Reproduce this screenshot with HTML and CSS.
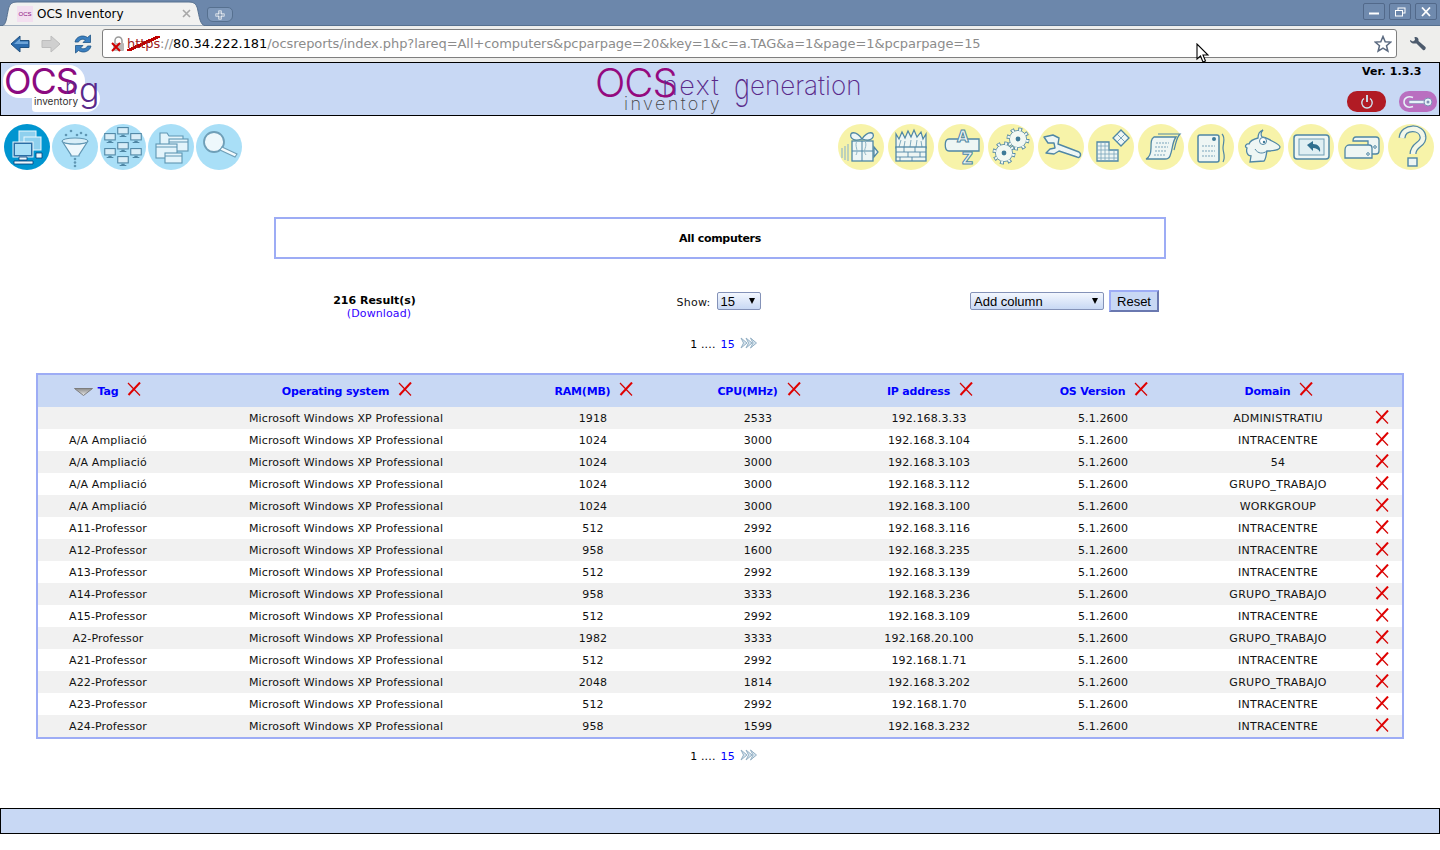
FILE: index.html
```html
<!DOCTYPE html>
<html lang="en">
<head>
<meta charset="utf-8">
<title>OCS Inventory</title>
<link rel="stylesheet" href="styles.css">
</head>
<body>
<svg class="defs" width="0" height="0" aria-hidden="true">
  <symbol id="del" viewBox="0 0 14 14">
    <path d="M1 1 L13 13.500" stroke="#d40000" stroke-width="1.200" fill="none"/>
    <path d="M13 .5 L1.500 13" stroke="#e00000" stroke-width="2" fill="none"/>
  </symbol>
  <symbol id="mon" viewBox="0 0 14 12">
    <rect x=".7" y=".7" width="12.600" height="7.600" fill="#d8edf7" stroke="#4f87a5" stroke-width="1.300"/>
    <path d="M5 10h4M3 11.300h8" stroke="#4f87a5" stroke-width="1.300"/>
  </symbol>
  <symbol id="pagenext" viewBox="0 0 17 12">
    <path d="M1 1 L7 6 L1 11 L3.500 6Z M6 1 L12 6 L6 11 L8.500 6Z M10.500 1 L16.500 6 L10.500 11 L13 6Z" fill="#d5e4ee" stroke="#93afc4"/>
  </symbol>
  <symbol id="gear" viewBox="0 0 24 24">
    <circle cx="12" cy="12" r="9.500" fill="none" stroke="#4f87a5" stroke-width="4" stroke-dasharray="3.730 3.730"/>
    <circle cx="12" cy="12" r="8.600" fill="#f2f8f2" stroke="#4f87a5" stroke-width=".8"/>
    <circle cx="12" cy="12" r="9.500" fill="none" stroke="#f2f8f2" stroke-width="2.600" stroke-dasharray="2 5.460" stroke-dashoffset="-.87"/>
    <circle cx="12" cy="12" r="2.400" fill="#3e7a98"/>
  </symbol>
</svg>

<div class="tabstrip">
  <div class="tab">
    <svg class="tab-shape" width="207" height="25" viewBox="0 0 207 25"><path d="M0 25 C6 25 6 20 8 10 C9 4 11 1 17 1 H189 C195 1 197 4 198 10 C200 20 201 25 207 25Z" fill="#f1f1f0" stroke="#56708f"/></svg>
    <span class="favicon"><span class="favicon-text">OCS</span></span>
    <span class="tab-title">OCS Inventory</span>
    <svg class="tab-close" width="9" height="9" viewBox="0 0 9 9"><path d="M1 1L8 8M8 1L1 8" stroke="#a8a8a8" stroke-width="1.600"/></svg>
  </div>
  <div class="newtab"><svg width="12" height="12" viewBox="0 0 12 12"><path d="M6 1.500v9M1.500 6h9" stroke="#fff" stroke-width="3.200"/><path d="M6 2v8M2 6h8" stroke="#58769b" stroke-width="1"/></svg></div>
  <div class="winbtns">
    <span class="winbtn"><svg width="12" height="10" viewBox="0 0 12 10"><path d="M1 6.500h10" stroke="#fff" stroke-width="2"/></svg></span>
    <span class="winbtn"><svg width="12" height="10" viewBox="0 0 12 10"><rect x="4" y="1" width="7" height="5" fill="none" stroke="#fff"/><rect x="1.500" y="3.500" width="7" height="5.500" fill="#6c87ab" stroke="#fff"/></svg></span>
    <span class="winbtn"><svg width="12" height="10" viewBox="0 0 12 10"><path d="M2 .5L10 9M10 .5L2 9" stroke="#fff" stroke-width="1.800"/></svg></span>
  </div>
</div>

<div class="toolbar">
  <svg class="tool" width="20" height="20" viewBox="0 0 20 20"><path d="M1 10 L10 2 V6.500 H19 V13.500 H10 V18Z" fill="#2c6cae" stroke="#20507f"/><path d="M4 10 L10 4.500V7.500H18V10Z" fill="#6da4d8"/></svg>
  <svg class="tool tool-forward" width="20" height="20" viewBox="0 0 20 20"><path d="M19 10 L10 2 V6.500 H1 V13.500 H10 V18Z" fill="#cfcfcf" stroke="#bdbdbd"/></svg>
  <svg class="tool tool-reload" width="20" height="20" viewBox="0 0 20 20"><path d="M2 8 C3 3 9 0 14.500 3.500 L17.500 1 V8.500 H10 L12.500 6 C9 4 6.500 6 5.500 8Z" fill="#3b7fc0" stroke="#1f5587" stroke-width=".8"/><path d="M18 12 C17 17 11 20 5.500 16.500 L2.500 19 V11.500 H10 L7.500 14 C11 16 13.500 14 14.500 12Z" fill="#3b7fc0" stroke="#1f5587" stroke-width=".8"/></svg>
  <div class="omnibox">
    <svg class="lock" width="16" height="17" viewBox="0 0 16 17"><path d="M5 7V4.500a3.500 3.500 0 0 1 7 0V7" fill="none" stroke="#9a9a9a" stroke-width="1.500"/><rect x="3" y="7" width="11" height="8" rx="1" fill="#b8b8b8"/><path d="M2 7L10 15M10 7L2 15" stroke="#d00000" stroke-width="2"/></svg>
    <span class="url"><span class="url-scheme">https</span>://<span class="url-host">80.34.222.181</span>/ocsreports/index.php?lareq=All+computers&amp;pcparpage=20&amp;key=1&amp;c=a.TAG&amp;a=1&amp;page=1&amp;pcparpage=15</span>
    <svg class="star" width="18" height="18" viewBox="0 0 18 18"><path d="M9 1.500 L11.200 6.700 L16.800 7.100 L12.500 10.700 L13.900 16.200 L9 13.200 L4.100 16.200 L5.500 10.700 L1.200 7.100 L6.800 6.700Z" fill="#fff" stroke="#5b6a80" stroke-width="1.500"/></svg>
  </div>
  <svg class="wrench" width="18" height="16" viewBox="0 0 18 16"><path d="M1 4 L4 5.500 L6 4 L5.500 1 C8 .5 10 2 9.500 5 L16.500 11 C17.500 12.500 15.500 15 14 14 L7.500 7.500 C4.500 8 1 7 1 4Z" fill="#4c5a6c"/></svg>
</div>

<header class="site-header">
  <div class="logo-small">
    <span class="ls-bg"></span>
    <span class="ls-ocs">OCS</span>
    <span class="ls-n">n</span>
    <span class="ls-g">g</span>
    <span class="ls-inv">inventory</span>
  </div>
  <div class="logo-big">
    <span class="lb-ocs">OCS</span>
    <span class="lb-next">next</span>
    <span class="lb-gen"><span class="lb-g">g</span>eneration</span>
    <span class="lb-inv">inventory</span>
  </div>
  <div class="header-right">
    <div class="version">Ver. 1.3.3</div>
    <div class="pills">
      <span class="pill pill-red"><svg width="16" height="16" viewBox="0 0 16 16"><path d="M5 4.500 A5.200 5.200 0 1 0 11 4.500" fill="none" stroke="#cfe7f3" stroke-width="1.400"/><path d="M8 1v7" stroke="#cfe7f3" stroke-width="1.800"/></svg></span>
      <span class="pill pill-purple"><svg width="32" height="16" viewBox="0 0 32 16"><path d="M11 3.500 C6 1.500 2 4 2 8 C2 12 6 14.500 11 12.500" fill="none" stroke="#e6f2f8" stroke-width="1.500"/><rect x="7" y="6.500" width="17" height="3" fill="#e6f2f8" stroke="#7d90b5" stroke-width=".6"/><circle cx="26" cy="8" r="4" fill="#e6f2f8" stroke="#7d90b5"/><circle cx="26" cy="8" r="1.500" fill="#7d90b5"/></svg></span>
    </div>
  </div>
</header>

<nav class="icon-nav">
  <div class="icon-group">
    <span class="nav-icon nav-active"><svg width="46" height="46" viewBox="0 0 46 46"><g fill="#8fd0ee" stroke="#eaf7fd" stroke-width="1"><rect x="15" y="7" width="17" height="12"/><rect x="20" y="13" width="17" height="13"/><rect x="9" y="18" width="20" height="15" fill="#2a6ea6"/></g><rect x="11" y="20" width="16" height="11" fill="#a9dff7"/><g fill="#eaf7fd" stroke="#003d78" stroke-width=".8"><path d="M15 33v3h8v-3z"/><path d="M10 37h19v3H10z"/><path d="M32 29h6v5h-6z"/></g></svg></span>
    <span class="nav-icon nav-blue"><svg width="46" height="46" viewBox="0 0 46 46"><path d="M10 17 C14 21 32 21 36 17 L27 31 V32 H19 V31Z" fill="#eef8fc" stroke="#5f96b3" stroke-width="1.200"/><ellipse cx="23" cy="17" rx="13" ry="3" fill="#d7eef8" stroke="#5f96b3"/><g fill="#5f96b3"><circle cx="14" cy="11" r="1.300"/><circle cx="19" cy="7" r="1.300"/><circle cx="25" cy="11" r="1.300"/><circle cx="29" cy="9" r="1.300"/><circle cx="34" cy="11" r="1.300"/><circle cx="23" cy="35" r="1.300"/><circle cx="23" cy="38.500" r="1.300"/><circle cx="23" cy="42" r="1.300"/></g></svg></span>
    <span class="nav-icon nav-blue"><svg width="46" height="46" viewBox="0 0 46 46"><use href="#mon" x="17" y="3" width="12" height="10"/><use href="#mon" x="4" y="9" width="12" height="10"/><use href="#mon" x="30" y="9" width="12" height="10"/><use href="#mon" x="17" y="18" width="12" height="10"/><use href="#mon" x="4" y="24" width="12" height="10"/><use href="#mon" x="30" y="24" width="12" height="10"/><use href="#mon" x="17" y="32" width="12" height="10"/></svg></span>
    <span class="nav-icon nav-blue"><svg width="46" height="46" viewBox="0 0 46 46"><g fill="#e3f4fb" stroke="#5f96b3" stroke-width="1.100"><path d="M12 22V9h7l2 3h14v10z"/><rect x="21" y="15" width="19" height="12"/><rect x="8" y="20" width="21" height="14"/><rect x="17" y="29" width="17" height="10"/></g><path d="M21 18h19M8 23h21M17 32h17" stroke="#5f96b3"/></svg></span>
    <span class="nav-icon nav-blue"><svg width="46" height="46" viewBox="0 0 46 46"><circle cx="18" cy="18" r="10" fill="#eef8fc" stroke="#6f9fb8" stroke-width="1.800"/><path d="M26 23 L41 30 L39 33 L24 26Z" fill="#f3fafd" stroke="#6f9fb8" stroke-width="1.100"/></svg></span>
  </div>
  <div class="icon-group icon-group-right">
    <span class="nav-icon nav-yellow"><svg width="46" height="46" viewBox="0 0 46 46"><g fill="#edf6f6" stroke="#4f87a5" stroke-width="1.300"><rect x="14" y="17" width="21" height="20"/><path d="M24 15 C18 6 11 8 13 13 C15 17 21 16 24 15 C27 16 33 17 35 13 C37 8 30 6 24 15Z"/><path d="M36 23l4 5-4 5z"/></g><path d="M14 27h21M24 17v20" stroke="#4f87a5"/><path d="M19 17c-3 5 2 9-1 14M27 17c3 6-3 9 1 14" fill="none" stroke="#8eb4c4"/><path d="M4 24v10M7 22v14M10 20v17" stroke="#9fbfc6" stroke-width="1.300"/></svg></span>
    <span class="nav-icon nav-yellow"><svg width="46" height="46" viewBox="0 0 46 46"><path d="M8 24 V10 L11 15 L14 8 L17 14 L20 7 L23 13 L26 6 L29 13 L33 8 L35 15 L38 10 V24Z" fill="#eef6f4" stroke="#4f87a5" stroke-width="1.200"/><path d="M11 23l2-7M16 23l1-6M22 23l1-7M28 23l1-7M34 23l-1-6" stroke="#7fa9bd"/><rect x="8" y="23" width="30" height="14" fill="#eef6f4" stroke="#4f87a5" stroke-width="1.300"/><path d="M8 28h30M8 33h30M16 23v5M27 23v5M32 28v5M20 28v5M12 33v4M24 33v4" stroke="#4f87a5" stroke-width=".9"/></svg></span>
    <span class="nav-icon nav-yellow"><svg width="46" height="46" viewBox="0 0 46 46"><path d="M11 15 H41 V27 H11 C6 27 6 15 11 15Z" fill="#eef6f4" stroke="#4f87a5" stroke-width="1.300"/><text class="az" x="19" y="18">A</text><text class="az" x="24" y="40">Z</text></svg></span>
    <span class="nav-icon nav-yellow"><svg width="46" height="46" viewBox="0 0 46 46"><use href="#gear" x="18" y="3" width="24" height="24"/><use href="#gear" x="4" y="17" width="24" height="24"/></svg></span>
    <span class="nav-icon nav-yellow"><svg width="46" height="46" viewBox="0 0 46 46"><path d="M6 13 L15 11 L21 14 L20 20 L41 28 C44 30 42 35 39 33 L21 27 L16 30 L8 29 L12 25 L17 24 L16 19 L10 19Z" fill="#eef6f4" stroke="#4f87a5" stroke-width="1.400" stroke-linejoin="round"/></svg></span>
    <span class="nav-icon nav-yellow"><svg width="46" height="46" viewBox="0 0 46 46"><path d="M9 18h12v8h9v11H9z" fill="#eef6f4" stroke="#4f87a5" stroke-width="1.300"/><path d="M13 18v19M17 18v19M21 26v11M26 26v11M9 22h12M9 26h21M9 30h21M9 34h21" stroke="#7aa5bb" stroke-width=".8"/><path d="M33 6 L41 14 L33 22 L25 14Z" fill="#eef6f4" stroke="#4f87a5" stroke-width="1.300"/><path d="M29 10l8 8M37 10l-8 8" stroke="#7aa5bb"/></svg></span>
    <span class="nav-icon nav-yellow"><svg width="46" height="46" viewBox="0 0 46 46"><path d="M16 13 H38 C34 18 35 25 32 32 C31 35 29 35 27 35 H8 C12 33 13 29 13 24 C13 18 13 15 16 13Z" fill="#eef6f4" stroke="#4f87a5" stroke-width="1.300"/><path d="M20 10 H42 C38 14 38 20 36 26" fill="none" stroke="#4f87a5" stroke-width="1.200"/><path d="M18 19h13M17 23h13M17 27h12M16 31h11" stroke="#7aa5bb" stroke-dasharray="2 1"/></svg></span>
    <span class="nav-icon nav-yellow"><svg width="46" height="46" viewBox="0 0 46 46"><rect x="10" y="11" width="21" height="27" rx="2" fill="#eef6f4" stroke="#4f87a5" stroke-width="1.500"/><circle cx="26" cy="15" r="2" fill="#3e7a98"/><path d="M14 22h13M14 27h13M14 32h13" stroke="#7aa5bb" stroke-dasharray="2 1"/><path d="M34 10 C38 14 35 19 35 24 C35 29 38 32 35 38" fill="none" stroke="#4f87a5" stroke-width="1.200"/></svg></span>
    <span class="nav-icon nav-yellow"><svg width="46" height="46" viewBox="0 0 46 46"><path d="M20 14 C20 9 22 7 25 6 C22 9 23 11 24 13 C28 13 30 15 34 17 C38 19 42 21 42 23 C42 26 34 27 29 27 C28 31 28 35 26 37 L12 38 L13 32 C9 32 8 27 9 24 C6 23 8 19 11 20 C12 17 16 15 20 14Z" fill="#eef6f4" stroke="#4f87a5" stroke-width="1.300"/><circle cx="25" cy="17" r="3.500" fill="#fff" stroke="#4f87a5"/><circle cx="26" cy="18" r="1.200" fill="#3e7a98"/><path d="M17 25 C20 30 25 30 29 27" fill="none" stroke="#4f87a5"/></svg></span>
    <span class="nav-icon nav-yellow"><svg width="46" height="46" viewBox="0 0 46 46"><rect x="6" y="11" width="35" height="24" rx="3" fill="#eef6f4" stroke="#4f87a5" stroke-width="1.500"/><rect x="11" y="15" width="25" height="16" fill="#dfeff3" stroke="#6e9db3"/><path d="M19 21 L25 17 V20 C30 20 33 23 32 28 C30 25 28 24 25 24 V27Z" fill="#2f6f8f"/></svg></span>
    <span class="nav-icon nav-yellow"><svg width="46" height="46" viewBox="0 0 46 46"><path d="M15 17 C15 15 16 13 18 13 H38 C40 13 41 14 41 16 V27 C41 29 40 30 38 30 H30 V17Z" fill="#eef6f4" stroke="#4f87a5" stroke-width="1.300"/><path d="M11 21 H31 C33 21 34 22 34 24 V34 H7 V26 C7 23 9 21 11 21Z" fill="#eef6f4" stroke="#4f87a5" stroke-width="1.300"/><circle cx="30" cy="30" r="1.300" fill="none" stroke="#4f87a5"/><circle cx="37" cy="23" r="1.300" fill="none" stroke="#4f87a5"/></svg></span>
    <span class="nav-icon nav-yellow"><svg width="46" height="46" viewBox="0 0 46 46"><path d="M14 14 C15 2 34 2 35 13 C36 21 25 20 25 30" fill="none" stroke="#4f87a5" stroke-width="7"/><path d="M14 14 C15 2 34 2 35 13 C36 21 25 20 25 30" fill="none" stroke="#f3f7e8" stroke-width="4.500"/><rect x="20" y="34" width="9" height="8" fill="#eef6f4" stroke="#4f87a5" stroke-width="1.400"/></svg></span>
  </div>
</nav>

<section class="title-box">All computers</section>

<section class="controls">
  <div class="results"><strong>216 Result(s)</strong><a class="download" href="#">(Download)</a></div>
  <div class="show"><span>Show:</span><span class="select-wrap select-small"><select aria-label="Show"><option>15</option></select></span></div>
  <div class="columns"><span class="select-wrap select-wide"><select aria-label="Add column"><option>Add column</option></select></span><button class="reset" type="button">Reset</button></div>
</section>

<div class="pager"><span>1 ....</span> <a href="#">15</a> <svg class="pager-next" width="17" height="12"><use href="#pagenext"/></svg></div>

<table class="data">
  <thead>
    <tr>
      <th class="c-tag"><span class="th"><svg class="sort" width="19" height="8" viewBox="0 0 19 8"><defs><linearGradient id="sortfill" x1="0" y1="0" x2="0" y2="1"><stop offset="0" stop-color="#8c8c8c"/><stop offset="1" stop-color="#e8e8e8"/></linearGradient></defs><path d="M.5 .5 H18.500 L9.500 7.500Z" fill="url(#sortfill)" stroke="#7d7d7d"/></svg><a href="#">Tag</a><svg class="x" width="14" height="14"><use href="#del"/></svg></span></th>
      <th class="c-os"><span class="th"><a href="#">Operating system</a><svg class="x" width="14" height="14"><use href="#del"/></svg></span></th>
      <th class="c-ram"><span class="th"><a href="#">RAM(MB)</a><svg class="x" width="14" height="14"><use href="#del"/></svg></span></th>
      <th class="c-cpu"><span class="th"><a href="#">CPU(MHz)</a><svg class="x" width="14" height="14"><use href="#del"/></svg></span></th>
      <th class="c-ip"><span class="th"><a href="#">IP address</a><svg class="x" width="14" height="14"><use href="#del"/></svg></span></th>
      <th class="c-ver"><span class="th"><a href="#">OS Version</a><svg class="x" width="14" height="14"><use href="#del"/></svg></span></th>
      <th class="c-dom"><span class="th"><a href="#">Domain</a><svg class="x" width="14" height="14"><use href="#del"/></svg></span></th>
      <th class="c-del"></th>
    </tr>
  </thead>
  <tbody>
    <tr><td></td><td>Microsoft Windows XP Professional</td><td>1918</td><td>2533</td><td>192.168.3.33</td><td>5.1.2600</td><td>ADMINISTRATIU</td><td><svg class="x" width="14" height="14"><use href="#del"/></svg></td></tr>
    <tr><td>A/A Ampliació</td><td>Microsoft Windows XP Professional</td><td>1024</td><td>3000</td><td>192.168.3.104</td><td>5.1.2600</td><td>INTRACENTRE</td><td><svg class="x" width="14" height="14"><use href="#del"/></svg></td></tr>
    <tr><td>A/A Ampliació</td><td>Microsoft Windows XP Professional</td><td>1024</td><td>3000</td><td>192.168.3.103</td><td>5.1.2600</td><td>54</td><td><svg class="x" width="14" height="14"><use href="#del"/></svg></td></tr>
    <tr><td>A/A Ampliació</td><td>Microsoft Windows XP Professional</td><td>1024</td><td>3000</td><td>192.168.3.112</td><td>5.1.2600</td><td>GRUPO_TRABAJO</td><td><svg class="x" width="14" height="14"><use href="#del"/></svg></td></tr>
    <tr><td>A/A Ampliació</td><td>Microsoft Windows XP Professional</td><td>1024</td><td>3000</td><td>192.168.3.100</td><td>5.1.2600</td><td>WORKGROUP</td><td><svg class="x" width="14" height="14"><use href="#del"/></svg></td></tr>
    <tr><td>A11-Professor</td><td>Microsoft Windows XP Professional</td><td>512</td><td>2992</td><td>192.168.3.116</td><td>5.1.2600</td><td>INTRACENTRE</td><td><svg class="x" width="14" height="14"><use href="#del"/></svg></td></tr>
    <tr><td>A12-Professor</td><td>Microsoft Windows XP Professional</td><td>958</td><td>1600</td><td>192.168.3.235</td><td>5.1.2600</td><td>INTRACENTRE</td><td><svg class="x" width="14" height="14"><use href="#del"/></svg></td></tr>
    <tr><td>A13-Professor</td><td>Microsoft Windows XP Professional</td><td>512</td><td>2992</td><td>192.168.3.139</td><td>5.1.2600</td><td>INTRACENTRE</td><td><svg class="x" width="14" height="14"><use href="#del"/></svg></td></tr>
    <tr><td>A14-Professor</td><td>Microsoft Windows XP Professional</td><td>958</td><td>3333</td><td>192.168.3.236</td><td>5.1.2600</td><td>GRUPO_TRABAJO</td><td><svg class="x" width="14" height="14"><use href="#del"/></svg></td></tr>
    <tr><td>A15-Professor</td><td>Microsoft Windows XP Professional</td><td>512</td><td>2992</td><td>192.168.3.109</td><td>5.1.2600</td><td>INTRACENTRE</td><td><svg class="x" width="14" height="14"><use href="#del"/></svg></td></tr>
    <tr><td>A2-Professor</td><td>Microsoft Windows XP Professional</td><td>1982</td><td>3333</td><td>192.168.20.100</td><td>5.1.2600</td><td>GRUPO_TRABAJO</td><td><svg class="x" width="14" height="14"><use href="#del"/></svg></td></tr>
    <tr><td>A21-Professor</td><td>Microsoft Windows XP Professional</td><td>512</td><td>2992</td><td>192.168.1.71</td><td>5.1.2600</td><td>INTRACENTRE</td><td><svg class="x" width="14" height="14"><use href="#del"/></svg></td></tr>
    <tr><td>A22-Professor</td><td>Microsoft Windows XP Professional</td><td>2048</td><td>1814</td><td>192.168.3.202</td><td>5.1.2600</td><td>GRUPO_TRABAJO</td><td><svg class="x" width="14" height="14"><use href="#del"/></svg></td></tr>
    <tr><td>A23-Professor</td><td>Microsoft Windows XP Professional</td><td>512</td><td>2992</td><td>192.168.1.70</td><td>5.1.2600</td><td>INTRACENTRE</td><td><svg class="x" width="14" height="14"><use href="#del"/></svg></td></tr>
    <tr><td>A24-Professor</td><td>Microsoft Windows XP Professional</td><td>958</td><td>1599</td><td>192.168.3.232</td><td>5.1.2600</td><td>INTRACENTRE</td><td><svg class="x" width="14" height="14"><use href="#del"/></svg></td></tr>
  </tbody>
</table>

<div class="pager pager-bottom"><span>1 ....</span> <a href="#">15</a> <svg class="pager-next" width="17" height="12"><use href="#pagenext"/></svg></div>

<footer class="site-footer"></footer>

<svg class="cursor" width="14" height="21" viewBox="0 0 14 21"><path d="M1 1 V16 L4.500 13 L7 19 L9.500 18 L7 12 H12Z" fill="#fff" stroke="#000" stroke-width="1.100"/></svg>
</body>
</html>
```
FILE: styles.css
```css
* { box-sizing: border-box; }
html, body { margin: 0; padding: 0; }
body {
  width: 1440px;
  height: 850px;
  overflow: hidden;
  position: relative;
  background: #fff;
  color: #111;
  font-family: "DejaVu Sans", sans-serif;
  font-size: 11px;
}
.defs { position: absolute; }
a { color: #0000ff; text-decoration: none; }

/* browser chrome */
.tabstrip {
  height: 26px;
  background: #6c87ab;
  border-bottom: 1px solid #56708f;
  display: flex;
  align-items: flex-start;
  padding-top: 1px;
}
.tab {
  position: relative;
  width: 207px;
  height: 25px;
  display: flex;
  align-items: center;
  padding-left: 17px;
  flex: none;
}
.tab-shape { position: absolute; left: 0; top: 0; }
.favicon {
  position: relative;
  width: 16px;
  height: 16px;
  background: #f3dff0;
  display: flex;
  align-items: center;
  justify-content: center;
  overflow: hidden;
}
.favicon-text { font-size: 6px; color: #8b0a80; font-family: "Liberation Sans", sans-serif; }
.tab-title {
  position: relative;
  margin-left: 4px;
  font-size: 12px;
  color: #000;
  width: 145px;
}
.tab-close { position: relative; }
.newtab {
  margin: 6px 0 0;
  width: 26px;
  height: 15px;
  background: #7d97b9;
  border: 1px solid #56708f;
  border-radius: 3px 5px 6px 6px;
  display: flex;
  align-items: center;
  justify-content: center;
}
.winbtns { margin-left: auto; display: flex; gap: 4px; padding: 2px 3px 0 0; }
.winbtn {
  width: 22px;
  height: 17px;
  border: 1px solid #52698a;
  background: #6f8aae;
  border-radius: 2px;
  display: flex;
  align-items: center;
  justify-content: center;
}
.toolbar {
  height: 36px;
  background: #eeeeec;
  display: flex;
  align-items: center;
  padding: 0 0 1px 10px;
}
.tool { flex: none; margin-right: 11px; }
.tool-reload { margin-right: 9px; margin-left: 1px; }
.tool-forward { margin-right: 11px; }
.omnibox {
  position: relative;
  width: 1295px;
  height: 29px;
  background: #fff;
  border: 1px solid #7f7f7f;
  border-radius: 3px;
  display: flex;
  align-items: center;
  padding-left: 7px;
}
.lock { flex: none; margin-top: 2px; }
.url {
  margin-left: 1px;
  font-size: 13px;
  color: #8c8c8c;
  white-space: nowrap;
  letter-spacing: -0.07px;
}
.url-scheme {
  color: #a02020;
  background: linear-gradient(to bottom right, transparent 44%, #c00000 44%, #c00000 56%, transparent 56%);
}
.url-host { color: #000; }
.star { margin-left: auto; margin-right: 4px; }
.wrench { margin-left: 12px; }

/* site header */
.site-header {
  height: 54px;
  background: #c8d8f4;
  border: 1px solid #000;
  position: relative;
  display: flex;
  justify-content: space-between;
}
.logo-small { position: relative; width: 102px; height: 50px; }
.ls-bg {
  position: absolute;
  left: 2px; top: 2px;
  width: 82px; height: 33px;
  background: #fff;
  border-radius: 16px;
}
.ls-bg::after {
  content: "";
  position: absolute;
  left: 29px; top: 20px;
  width: 68px; height: 27px;
  background: #fff;
  border-radius: 14px 14px 14px 4px;
}
.ls-ocs, .ls-n, .ls-g, .ls-inv, .lb-ocs, .lb-next, .lb-gen, .lb-inv {
  position: absolute;
  line-height: 1;
  white-space: nowrap;
  font-family: "Inter", sans-serif;
}
.ls-ocs {
  left: 3px; top: 0;
  font-size: 36px;
  font-weight: 400;
  letter-spacing: -1px;
  color: #8b0a80;
}
.ls-n { left: 64px; top: 13px; font-size: 21px; color: #5a2a8a; font-weight: 300; }
.ls-g { left: 78px; top: 10px; font-size: 34px; color: #5a2a8a; font-weight: 300; }
.ls-inv { left: 33px; top: 33px; font-size: 10px; color: #333; }
.logo-big { position: absolute; left: 594px; top: 0; width: 270px; height: 50px; }
.lb-ocs {
  left: 0; top: 0;
  font-size: 40px;
  font-weight: 300;
  letter-spacing: -1px;
  color: #940a7f;
}
.lb-next { left: 67px; top: 9px; font-size: 27px; font-weight: 200; letter-spacing: 1.500px; color: #5a2a8a; }
.lb-gen { left: 139px; top: 10px; font-size: 26px; font-weight: 200; color: #5a2a8a; }
.lb-g {
  display: inline-block;
  width: 16px;
  font-size: 36px;
  line-height: 0;
  transform: translateY(4px) scaleX(.75);
  transform-origin: left bottom;
}
.lb-inv { left: 29px; top: 32px; font-size: 18px; font-weight: 200; letter-spacing: 2.400px; color: #444; }
.header-right {
  width: 90px;
  display: flex;
  flex-direction: column;
  justify-content: space-between;
  margin-right: 2px;
}
.version { font-weight: 700; font-size: 11px; color: #000; padding: 2px 0 0 0; letter-spacing: .1px; margin-left: 15px; }
.pills { display: flex; justify-content: space-between; margin-bottom: 3px; }
.pill {
  width: 39px;
  height: 21px;
  border-radius: 10px;
  display: flex;
  align-items: center;
  justify-content: center;
}
.pill-red { background: #b11b24; }
.pill-purple { background: #b96fc0; width: 38px; }

/* icon nav */
.icon-nav {
  display: flex;
  justify-content: space-between;
  padding: 8px 6px 0 4px;
}
.icon-group { display: flex; gap: 2px; }
.icon-group-right { gap: 4px; }
.nav-icon { width: 46px; height: 46px; border-radius: 50%; display: block; }
.nav-icon svg { display: block; }
.nav-active { background: #0095d0; }
.nav-blue { background: #a9dff7; }
.nav-yellow { background: #f7f3a9; }
.az {
  font-family: "DejaVu Sans", sans-serif;
  font-size: 15px;
  font-weight: 700;
  fill: #eef6f4;
  stroke: #4f87a5;
  stroke-width: 1;
}

/* title */
.title-box {
  width: 892px;
  height: 42px;
  margin: 47px auto 0;
  border: 2px solid #9dacf5;
  display: flex;
  align-items: center;
  justify-content: center;
  font-weight: 700;
  letter-spacing: -.3px;
  color: #000;
}

/* controls */
.controls {
  width: 1035px;
  height: 44px;
  margin: 31px 0 0 202px;
  display: grid;
  grid-template-columns: repeat(3, 1fr);
}
.results {
  display: flex;
  flex-direction: column;
  align-items: center;
  padding-top: 4px;
  line-height: 13px;
  color: #000;
}
.download { color: #3300ff; margin-left: 9px; letter-spacing: .1px; }
.show, .columns { display: flex; justify-content: center; align-items: flex-start; }
.show { gap: 6px; padding-top: 3px; line-height: 20px; letter-spacing: .25px; padding-right: 2px; }
.columns { gap: 5px; }
.select-wrap { position: relative; display: block; margin-top: 2px; }
.select-wrap::after {
  content: "";
  position: absolute;
  right: 6px; top: 6px;
  border-left: 3.500px solid transparent;
  border-right: 3.500px solid transparent;
  border-top: 6px solid #000;
  pointer-events: none;
}
.select-small { margin-top: -1px; }
.select-wrap select {
  display: block;
  appearance: none;
  height: 18px;
  padding: 0 0 0 3px;
  border: 1px solid #8492b8;
  border-radius: 2px;
  background: linear-gradient(#f3f7fe, #c8d8f4);
  color: #000;
  font-family: "Liberation Sans", sans-serif;
  font-size: 13px;
}
.select-small select { width: 44px; }
.select-wide select { width: 134px; }
.reset {
  width: 50px;
  height: 22px;
  padding: 0;
  background: #c8d8f4;
  border: 2px solid;
  border-color: #9dacf5 #6a78b0 #6a78b0 #9dacf5;
  color: #000;
  font-family: "Liberation Sans", sans-serif;
  font-size: 13px;
}

/* pager */
.pager {
  height: 20px;
  width: 1440px;
  display: flex;
  align-items: center;
  justify-content: center;
  gap: 5px;
  padding-left: 7px;
  color: #000;
  letter-spacing: .15px;
}
.pager-next { margin-top: -2px; }
.pager-bottom { margin-top: 7px; }

/* table */
.data {
  width: 1368px;
  margin: 19px 0 0 36px;
  table-layout: fixed;
  border-collapse: separate;
  border-spacing: 0;
  border: 2px solid #9dacf5;
}
.data th { height: 32px; background: #c8d8f4; padding: 0 0 0 2px; font-weight: 700; letter-spacing: -.2px; }
.data th.c-tag { padding: 0 1px 0 0; }
.data td { height: 22px; padding: 0; text-align: center; color: #111; letter-spacing: .13px; }
.data td:nth-child(7) { letter-spacing: .3px; }
.data td svg { display: block; margin: 0 auto; position: relative; left: -1px; top: -1px; }
.data tbody tr:nth-child(odd) td { background: #f1f1f1; }
.c-tag { width: 140px; }
.c-os { width: 336px; }
.c-ram { width: 158px; }
.c-cpu { width: 172px; }
.c-ip { width: 170px; }
.c-ver { width: 178px; }
.c-dom { width: 172px; }
.c-del { width: 38px; }
.th { display: inline-flex; align-items: center; gap: 9px; }
.th a { position: relative; }
.th .x { position: relative; top: -2px; }
.sort {
  margin-right: -4px;
  position: relative;
  top: 1px;
}

.site-footer {
  height: 26px;
  margin-top: 42px;
  background: #c8d8f4;
  border: 1px solid #000;
}
.cursor { position: absolute; left: 1196px; top: 43px; }
```
